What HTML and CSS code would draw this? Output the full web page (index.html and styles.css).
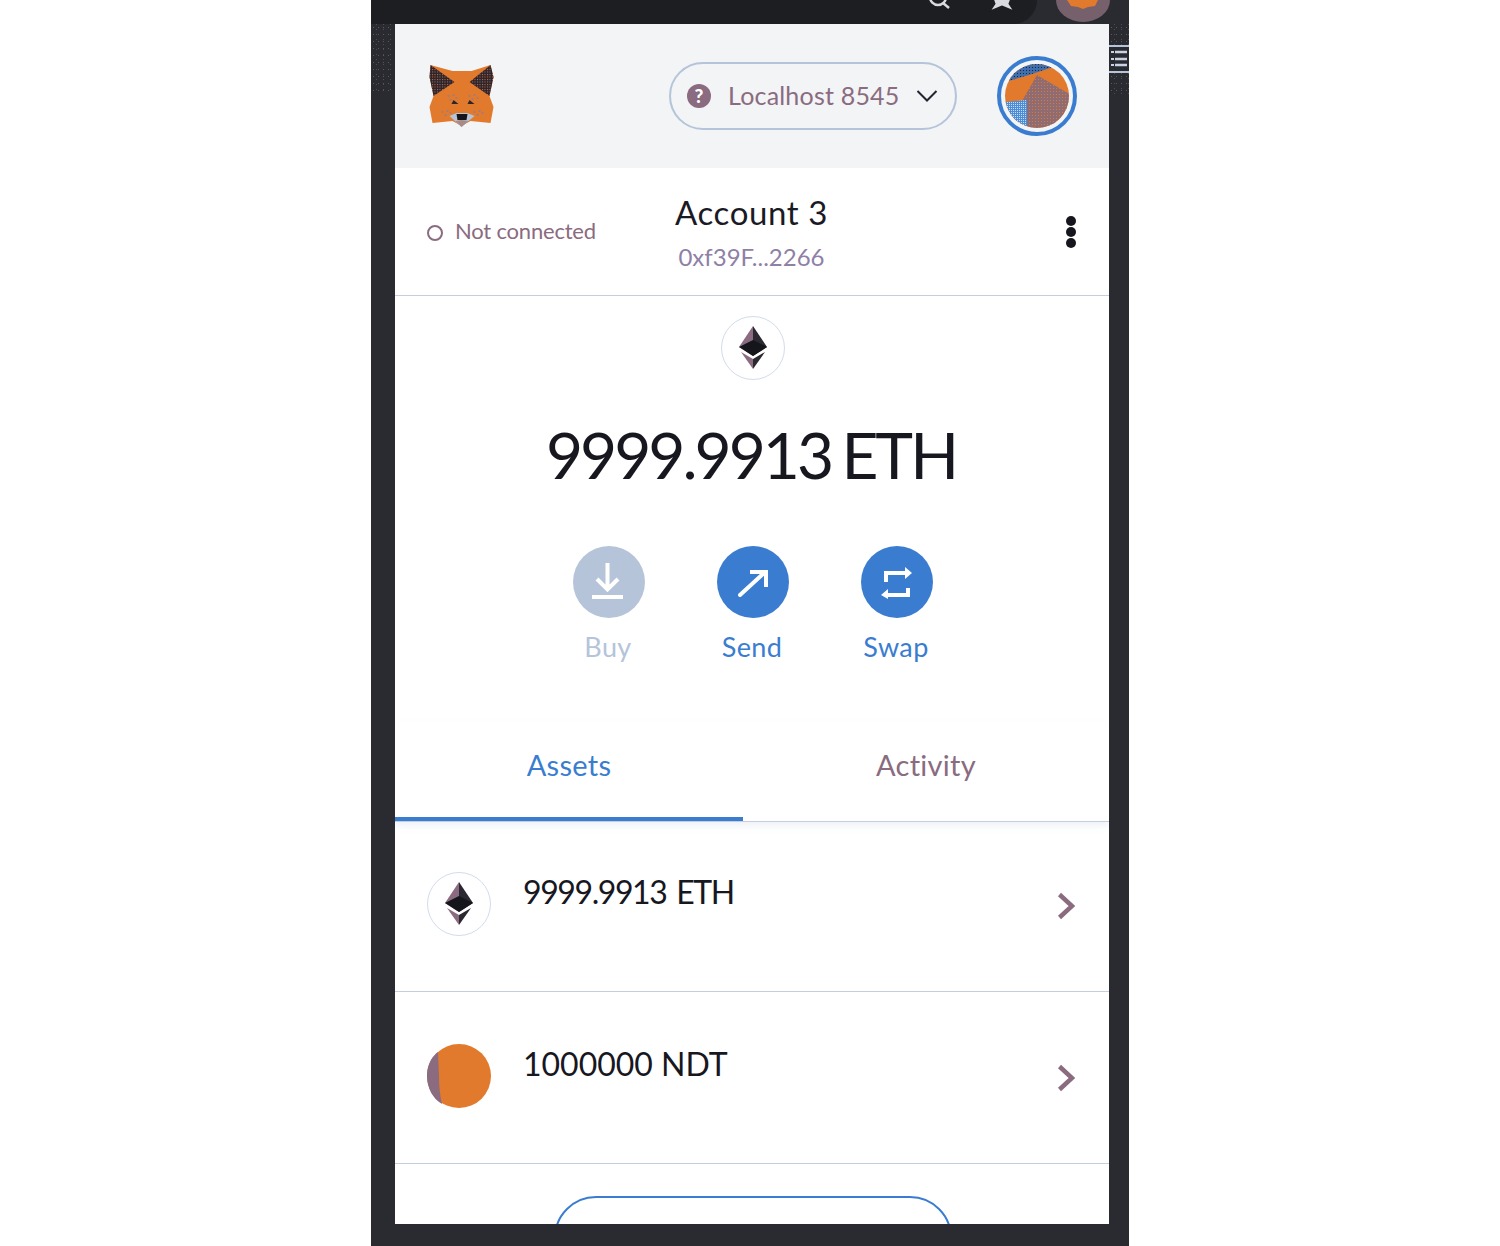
FILE: index.html
```html
<!DOCTYPE html>
<html lang="en">
<head>
<meta charset="utf-8">
<title>MetaMask</title>
<link rel="stylesheet" href="styles.css">
</head>
<body>
<div class="frame">
  <div class="browserbar">
    <div class="omnibox">
      <svg class="tb-icon" width="30" height="24" viewBox="0 0 30 24"><circle cx="13" cy="-3" r="8" fill="none" stroke="#d9dbe0" stroke-width="2.5"/><path d="M18 3l6 5" stroke="#d9dbe0" stroke-width="2.5"/></svg>
      <svg class="tb-icon" width="26" height="24" viewBox="0 0 26 24"><path d="M5-4l3 8-2 3 7-3 7 3-2-3 3-8" fill="#d9dbe0" stroke="#d9dbe0" stroke-width="2.500"/></svg>
    </div>
    <div class="ext">
      <svg width="56" height="24" viewBox="0 0 56 24"><path d="M1 0a27 22 0 0 0 54 0z" fill="#75606c"/><path d="M12 0h31l-3 6-7 1-5 2-5-2-7-1z" fill="#e27a2e"/></svg>
    </div>
  </div>
  <div class="mid">
    <div class="gutter gutter-left"><div class="speckle"></div></div>
    <main class="popup">
      <header class="topbar">
        <svg class="fox" width="66" height="64" viewBox="0 0 65 64">
          <defs>
            <pattern id="earDots" width="2.500" height="2.500" patternUnits="userSpaceOnUse"><rect width="2.500" height="2.500" fill="#2b2530"/><rect width="1" height="1" fill="#c9713a"/></pattern>
          </defs>
          <path d="M1 1l22 6h10l9 0 19-6 3 12-4 19 4 11-3 16-20-2-9 5-9-5-20 2-3-16 4-11-4-19z" fill="#e27a2e"/>
          <path d="M1 1L25 18 4 32 0 13z" fill="url(#earDots)"/>
          <path d="M61 1L40 18l20 14 4-19z" fill="url(#earDots)"/>
          <path d="M20 52l7-3h11l7 3-13 11z" fill="#b5c4d9"/>
          <path d="M26 57l6-1 7 1-7 6z" fill="#a98a86"/>
          <path d="M27 50h11l-1 6H28z" fill="#15151c"/>
          <path d="M24 36l5 4h-7zM40 36l5 4h-7z" fill="#2b2530"/>
          <path d="M18 31h2v2h-2zM23 30h2v2h-2zM20 35h2v2h-2zM26 33h2v2h-2zM39 31h2v2h-2zM44 30h2v2h-2zM42 34h2v2h-2zM47 33h2v2h-2zM12 47h2v2h-2zM17 46h2v2h-2zM15 50h2v2h-2zM20 48h2v2h-2zM44 47h2v2h-2zM49 46h2v2h-2zM47 50h2v2h-2zM52 48h2v2h-2z" fill="#a87a70"/>
        </svg>
        <button class="network">
          <span class="help">?</span>
          <span class="network-name">Localhost 8545</span>
          <svg class="chev-down" width="22" height="14" viewBox="0 0 22 14"><path d="M1.500 2l9.500 9.500L20.500 2" fill="none" stroke="#24242e" stroke-width="2"/></svg>
        </button>
        <div class="avatar-ring">
          <svg class="avatar" width="64" height="64" viewBox="0 0 64 64">
            <defs>
              <clipPath id="avatarClip"><circle cx="32" cy="32" r="32"/></clipPath>
              <pattern id="mauveDots" width="3" height="3" patternUnits="userSpaceOnUse"><rect width="3" height="3" fill="#8f6b72"/><rect width="1" height="1" fill="#d97a3c"/></pattern>
              <pattern id="navyDots" width="3" height="3" patternUnits="userSpaceOnUse"><rect width="3" height="3" fill="#3f6fae"/><rect width="1" height="1" fill="#26242c"/></pattern>
              <pattern id="skyDots" width="2" height="2" patternUnits="userSpaceOnUse"><rect width="2" height="2" fill="#4d8dd8"/><rect width="1" height="1" fill="#c4dcf5"/></pattern>
            </defs>
            <g clip-path="url(#avatarClip)">
              <rect width="64" height="64" fill="#e27a2e"/>
              <path d="M0 18l24-7 24-8L30-2H0z" fill="url(#navyDots)"/>
              <path d="M32 11l34 20v35H22V36l-5 1z" fill="url(#mauveDots)"/>
              <path d="M0 38l22-2v30H0z" fill="url(#skyDots)"/>
            </g>
          </svg>
        </div>
      </header>

      <section class="account">
        <div class="status"><span class="status-dot"></span>Not connected</div>
        <div class="account-id">
          <div class="account-name">Account 3</div>
          <div class="account-addr">0xf39F...2266</div>
        </div>
        <div class="dots"><i></i><i></i><i></i></div>
      </section>

      <section class="overview">
        <div class="eth-badge eth-badge-top">
          <svg width="28" height="44" viewBox="0 0 28 44"><path d="M14 0L0 21l14 9z" fill="#8a6b80"/><path d="M14 0l14 21-14 9z" fill="#2a2830"/><path d="M0 21l14-7 14 7-14 9z" fill="#15151c"/><path d="M2 26l12 7v10z" fill="#8a6b80"/><path d="M26 26l-12 7v10z" fill="#2a2830"/></svg>
        </div>
        <div class="balance">9999.9913 ETH</div>
        <div class="actions">
          <div class="action action-off">
            <span class="action-circle">
              <svg width="34" height="38" viewBox="0 0 34 38"><path d="M15.500 0v25M5 16l10.500 10.500L26 16" fill="none" stroke="#fff" stroke-width="4"/><path d="M0 34h31" stroke="#fff" stroke-width="4"/></svg>
            </span>
            <span class="action-label">Buy</span>
          </div>
          <div class="action">
            <span class="action-circle">
              <svg width="30" height="30" viewBox="0 0 30 30"><path d="M2 28L26 6" fill="none" stroke="#fff" stroke-width="4" stroke-linecap="round"/><path d="M12 5h16v15" fill="none" stroke="#fff" stroke-width="4"/></svg>
            </span>
            <span class="action-label">Send</span>
          </div>
          <div class="action">
            <span class="action-circle">
              <svg width="32" height="34" viewBox="0 0 32 34"><path d="M5 17V8h19M27 23v7H7" fill="none" stroke="#fff" stroke-width="4"/><path d="M24 2l7 6-7 6zM7 24l-7 6 7 4z" fill="#fff"/></svg>
            </span>
            <span class="action-label">Swap</span>
          </div>
        </div>
      </section>

      <nav class="tabs">
        <div class="tab tab-active">Assets</div>
        <div class="tab tab-rest">Activity</div>
      </nav>

      <div class="token token-first">
        <div class="eth-badge">
          <svg width="28" height="44" viewBox="0 0 28 44"><path d="M14 0L0 21l14 9z" fill="#8a6b80"/><path d="M14 0l14 21-14 9z" fill="#2a2830"/><path d="M0 21l14-7 14 7-14 9z" fill="#15151c"/><path d="M2 26l12 7v10z" fill="#8a6b80"/><path d="M26 26l-12 7v10z" fill="#2a2830"/></svg>
        </div>
        <div class="token-name token-name-eth">9999.9913 ETH</div>
        <svg class="chev" width="18" height="28" viewBox="0 0 18 28"><path d="M2.500 2.500L15 14 2.500 25.500" fill="none" stroke="#8a6b80" stroke-width="4.500"/></svg>
      </div>
      <div class="token">
        <svg class="token-img" width="64" height="64" viewBox="0 0 64 64"><circle cx="32" cy="32" r="32" fill="#e27a2e"/><path d="M11 8C3 14 0 23 0 32c0 12 6 23 15 28-2-8-3-18-3-28z" fill="#8a6b80"/></svg>
        <div class="token-name">1000000 NDT</div>
        <svg class="chev" width="18" height="28" viewBox="0 0 18 28"><path d="M2.500 2.500L15 14 2.500 25.500" fill="none" stroke="#8a6b80" stroke-width="4.500"/></svg>
      </div>
      <div class="import-wrap"><div class="import-btn"></div></div>
    </main>
    <div class="gutter gutter-right">
      <div class="speckle speckle-short"></div>
      <svg class="side-icon" width="20" height="28" viewBox="0 0 20 28">
        <path d="M0 1h20M0 27h20" stroke="#b5c4d9" stroke-width="2"/>
        <path d="M2 7h3M2 14h3M2 20h3" stroke="#c9d3e3" stroke-width="2"/>
        <path d="M6 7h12M6 14h12M6 20h12" stroke="#c9d3e3" stroke-width="2.500"/>
      </svg>
      <div class="speckle speckle-short"></div>
    </div>
  </div>
</div>
</body>
</html>
```
FILE: styles.css
```css
* { box-sizing: border-box; }
html, body { margin: 0; padding: 0; background: #fff; }
body { font-family: "Lato", "Liberation Sans", sans-serif; height: 1246px; overflow: hidden; }
.frame { width: 758px; height: 1246px; margin: 0 auto; background: #2a2b30; display: flex; flex-direction: column; }
.browserbar { height: 24px; display: flex; justify-content: space-between; overflow: hidden; }
.omnibox { width: 666px; background: #1d1e22; border-bottom-right-radius: 24px; display: flex; justify-content: flex-end; padding-right: 22px; gap: 34px; }
.ext { padding: 0 18px 0 0; }
.tb-icon, .ext svg { display: block; }
.mid { display: flex; height: 1200px; }
.gutter { width: 24px; flex: none; }
.speckle { height: 69px; width: 20px; background-image: radial-gradient(circle, #5f5460 0.7px, transparent 0.9px), radial-gradient(circle, #55495a 0.6px, transparent 0.8px); background-size: 5px 7px, 7px 5px; background-position: 0 0, 2px 3px; }
.speckle-short { height: 21px; }
.gutter-right { width: 20px; }
.side-icon { display: block; }
.popup { width: 714px; height: 1200px; background: #fff; overflow: hidden; display: flex; flex-direction: column; flex: none; }

.topbar { height: 144px; flex: none; background: #f2f4f6; display: flex; align-items: center; padding: 0 32px 0 34px; }
.fox { flex: none; }
.network { margin-left: 174px; width: 288px; height: 68px; border: 2px solid #b5c4d9; border-radius: 34px; background: transparent; display: flex; align-items: center; padding: 0 17px 0 16px; font: inherit; color: #8a6b80; }
.help { width: 24px; height: 24px; border-radius: 50%; background: #8a6b80; color: #fff; font-size: 19px; font-weight: 900; line-height: 24px; text-align: center; flex: none; }
.network-name { font-size: 25px; letter-spacing: 0.2px; margin-left: 17px; white-space: nowrap; flex: 1; text-align: left; position: relative; top: -1px; }
.chev-down { flex: none; }
.avatar-ring { margin-left: auto; width: 80px; height: 80px; border: 4px solid #3a7dd0; border-radius: 50%; display: flex; align-items: center; justify-content: center; flex: none; }
.avatar { display: block; }

.account { height: 128px; flex: none; border-bottom: 1px solid #c3cfdf; display: grid; grid-template-columns: 1fr auto 1fr; align-items: center; padding: 0 33px 0 32px; }
.status { display: flex; align-items: center; font-size: 22px; letter-spacing: -0.2px; color: #8a6b80; white-space: nowrap; line-height: 26px; margin-top: -2px; }
.status-dot { width: 16px; height: 16px; border: 2px solid #8a6b80; border-radius: 50%; margin-right: 12px; position: relative; top: 2px; }
.account-id { text-align: center; }
.account-name { font-size: 33px; letter-spacing: 0.6px; line-height: 40px; color: #1a1a24; }
.account-addr { font-size: 24px; line-height: 30px; margin-top: 10px; color: #8f80a6; }
.dots { justify-self: end; display: flex; flex-direction: column; gap: 1px; margin-top: 1px; }
.dots i { display: block; width: 10px; height: 10px; border-radius: 50%; background: #16161e; }

.overview { height: 425px; flex: none; display: flex; flex-direction: column; align-items: center; padding-top: 20px; }
.eth-badge { width: 64px; height: 64px; border: 1px solid #d3dcea; border-radius: 50%; display: flex; align-items: center; justify-content: center; flex: none; }
.eth-badge-top { margin-left: 2px; }
.balance { font-size: 64px; line-height: 80px; margin-top: 35px; margin-right: 2px; color: #17171f; letter-spacing: -3px; word-spacing: -3px; white-space: nowrap; }
.actions { display: flex; margin-top: 51px; }
.action { width: 144px; display: flex; flex-direction: column; align-items: center; color: #3a7dd0; }
.action-circle { width: 72px; height: 72px; border-radius: 50%; background: #3a7dd0; display: flex; align-items: center; justify-content: center; margin-left: 2px; }
.action-label { font-size: 27px; letter-spacing: 0.4px; line-height: 30px; margin-top: 14px; }
.action-off { color: #b5c4d9; }
.action-off .action-circle { background: #b5c4d9; }

.tabs { height: 101px; flex: none; display: flex; border-bottom: 1px solid #c3cfdf; box-shadow: 0 4px 6px rgba(181,196,217,.22); position: relative; }
.tab { font-size: 29px; letter-spacing: 0.3px; display: flex; align-items: flex-start; justify-content: center; padding-top: 26px; color: #8a6b80; }
.tab-active { width: 348px; color: #3a7dd0; border-bottom: 4px solid #3a7dd0; height: 100px; }
.tab-rest { flex: 1; }

.token { height: 172px; flex: none; border-bottom: 1px solid #c3cfdf; display: flex; align-items: flex-start; padding: 52px 34px 0 32px; }
.token-first { height: 170px; padding-top: 50px; }
.token-img { flex: none; display: block; }
.token-name { font-size: 32px; line-height: 40px; color: #17171f; margin-left: 32px; flex: 1; }
.token-name-eth { letter-spacing: -1.4px; word-spacing: 3px; }
.chev { flex: none; margin-top: 20px; }

.import-wrap { padding-top: 32px; display: flex; justify-content: center; padding-left: 2px; }
.import-btn { width: 398px; height: 90px; border: 2px solid #3a7dd0; border-radius: 42px; flex: none; }
```
